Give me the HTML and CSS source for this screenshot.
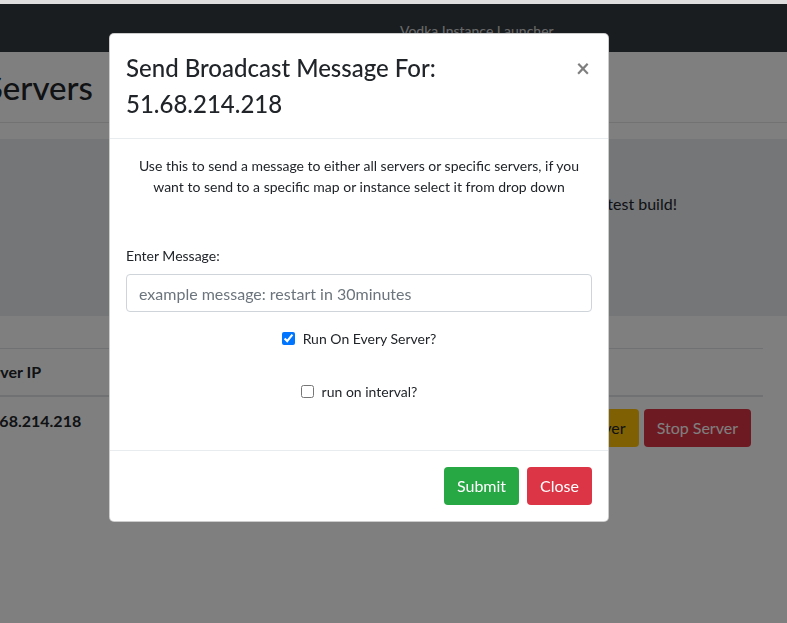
FILE: index.html
```html
<!DOCTYPE html>
<html lang="en">
<head>
<meta charset="utf-8">
<title>Vodka Instance Launcher</title>
<link rel="stylesheet" href="styles.css">
</head>
<body>
<div class="strip"></div>
<nav class="navbar"><span class="brand">Vodka Instance Launcher</span></nav>
<main class="page">
  <h1 class="page-title">Servers</h1>
  <hr class="rule">
  <section class="jumbotron">
    <p class="jumbo-text">All servers are running the latest build!</p>
  </section>
  <table class="servers">
    <thead>
      <tr><th class="col-ip">Server IP</th><th>Map</th><th class="col-actions"></th></tr>
    </thead>
    <tbody>
      <tr>
        <td class="col-ip strong">51.68.214.218</td>
        <td></td>
        <td class="col-actions"><button class="btn btn-warning">Restart Server</button><button class="btn btn-danger-dim">Stop Server</button></td>
      </tr>
    </tbody>
  </table>
</main>
<div class="backdrop"></div>
<div class="modal">
  <div class="modal-header">
    <h4 class="modal-title">Send Broadcast Message For:<br>51.68.214.218</h4>
    <button class="close" type="button">&times;</button>
  </div>
  <div class="modal-body">
    <p class="intro">Use this to send a message to either all servers or specific servers, if you want to send to a specific map or instance select it from drop down</p>
    <label class="field-label" for="msg">Enter Message:</label>
    <input id="msg" class="form-control" type="text" placeholder="example message: restart in 30minutes">
    <div class="check-row first"><input type="checkbox" id="every" checked><label for="every">Run On Every Server?</label></div>
    <div class="check-row second"><input type="checkbox" id="interval"><label for="interval">run on interval?</label></div>
  </div>
  <div class="modal-footer">
    <button class="btn btn-success">Submit</button>
    <button class="btn btn-danger">Close</button>
  </div>
</div>
</body>
</html>
```
FILE: styles.css
```css
html, body {
  margin: 0;
  padding: 0;
  overflow: hidden;
}
body {
  font-family: Lato, "Open Sans", sans-serif;
  font-size: 16px;
  color: #212529;
  background: #fff;
  width: 787px;
  height: 623px;
}
.strip {
  height: 4px;
  background: #dedede;
}
.navbar {
  height: 48px;
  background: #343a40;
  display: flex;
  align-items: center;
  padding-left: 400px;
}
.brand {
  color: rgba(255, 255, 255, 0.8);
  font-size: 14px;
  padding-top: 4px;
}
.page-title {
  font-size: 33px;
  font-weight: 500;
  line-height: 41px;
  margin: 15px 0 0 -15px;
}
.rule {
  border: 0;
  border-top: 1px solid rgba(0, 0, 0, 0.1);
  margin: 14px 0 0;
}
.jumbotron {
  margin-top: 16px;
  background: #e9ecef;
  height: 177px;
  box-sizing: border-box;
  padding: 53px 110px 0 0;
}
.jumbo-text {
  margin: 0;
  text-align: right;
  line-height: 24px;
}
.servers {
  margin-top: 32px;
  margin-left: -35px;
  width: 798px;
  border-collapse: collapse;
}
.servers th, .servers td {
  padding: 12px;
  text-align: left;
  vertical-align: top;
  line-height: 24px;
}
.servers thead th {
  border-top: 1px solid #dee2e6;
  border-bottom: 2px solid #dee2e6;
  padding: 11px 12px;
  font-weight: 700;
}
.servers .strong {
  font-weight: 700;
}
.servers .col-actions {
  text-align: right;
}
.btn {
  font-family: inherit;
  font-size: 16px;
  line-height: 24px;
  padding: 6px 12px;
  border: 1px solid transparent;
  border-radius: 4px;
  color: #fff;
  cursor: pointer;
}
.servers .btn {
  margin-left: 5px;
}
.btn-warning {
  background: #ffc107;
  color: #212529;
}
.btn-danger-dim {
  background: #dc3545;
}
.backdrop {
  position: fixed;
  top: 4px;
  left: 0;
  right: 0;
  bottom: 0;
  background: rgba(0, 0, 0, 0.5);
}
.modal {
  position: absolute;
  left: 109px;
  top: 33px;
  width: 498px;
  background: #fff;
  border: 1px solid rgba(0, 0, 0, 0.2);
  border-radius: 5px;
}
.modal-header {
  display: flex;
  align-items: flex-start;
  justify-content: space-between;
  padding: 16px;
  border-bottom: 1px solid #e9ecef;
}
.modal-title {
  margin: 0;
  font-size: 24px;
  font-weight: 500;
  line-height: 36px;
}
.close {
  background: none;
  border: 0;
  padding: 0;
  margin: 6px 2px 0 0;
  font-family: inherit;
  font-size: 24px;
  font-weight: 700;
  line-height: 1;
  color: #000;
  opacity: 0.5;
}
.modal-body {
  padding: 16px;
  font-size: 14px;
  line-height: 21px;
}
.intro {
  margin: 0;
  text-align: center;
  padding: 0 6px;
}
.field-label {
  display: block;
  margin-top: 48px;
  margin-bottom: 8px;
}
.form-control {
  display: block;
  box-sizing: border-box;
  width: 100%;
  height: 38px;
  padding: 6px 12px;
  font-family: inherit;
  font-size: 16px;
  color: #495057;
  border: 1px solid #ced4da;
  border-radius: 4px;
}
.form-control::placeholder {
  color: #6c757d;
}
.check-row {
  display: flex;
  justify-content: center;
  align-items: center;
  gap: 8px;
  height: 21px;
}
.check-row input {
  margin: 0;
  width: 13px;
  height: 13px;
}
.check-row.first {
  margin-top: 16px;
}
.check-row.second {
  margin-top: 32px;
  margin-bottom: 32px;
}
.modal-footer {
  display: flex;
  justify-content: flex-end;
  gap: 8px;
  padding: 16px;
  border-top: 1px solid #e9ecef;
}
.btn-success {
  background: #28a745;
}
.btn-danger {
  background: #dc3545;
}
```
